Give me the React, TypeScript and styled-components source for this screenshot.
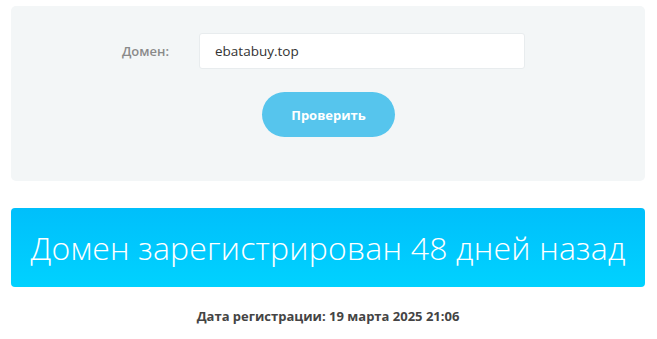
import React from 'react';
import styled, { createGlobalStyle } from 'styled-components';

const GlobalStyle = createGlobalStyle`
  body {
    margin: 0;
    background: #fff;
    font-family: 'Open Sans', 'Liberation Sans', sans-serif;
  }
`;

const Page = styled.div`
  padding: 6px 12px 0 11px;
`;

const FormPanel = styled.form`
  background: #f3f6f7;
  border-radius: 5px;
  height: 175px;
  box-sizing: border-box;
  padding-top: 27px;
  display: flex;
  flex-direction: column;
  align-items: center;
`;

const Row = styled.div`
  display: flex;
  align-items: center;
  width: 100%;
`;

const Label = styled.label`
  width: 188px;
  padding-right: 30px;
  box-sizing: border-box;
  text-align: right;
  font-family: 'Open Sans', sans-serif;
  font-size: 13px;
  font-weight: 600;
  color: #8a8a8a;
`;

const Input = styled.input`
  width: 326px;
  height: 36px;
  box-sizing: border-box;
  border: 1px solid #e8ecee;
  border-radius: 3px;
  background: #fff;
  padding: 0 15px;
  font-family: 'Open Sans', sans-serif;
  font-size: 13.5px;
  color: #333;
  outline: none;
`;

const Button = styled.button`
  margin-top: 23px;
  margin-left: 1px;
  width: 133px;
  height: 45px;
  border: none;
  border-radius: 23px;
  background: #56c5ed;
  color: #fff;
  font-family: 'Open Sans', sans-serif;
  font-weight: 700;
  font-size: 13px;
  cursor: pointer;
`;

const Banner = styled.div`
  margin-top: 27px;
  height: 79px;
  border-radius: 4px;
  background: linear-gradient(to bottom, #00bffb, #00d2ff);
  display: flex;
  align-items: center;
  justify-content: center;
  color: #fff;
  font-family: 'Open Sans', sans-serif;
  font-weight: 300;
  font-size: 32px;
  letter-spacing: 0.2px;
`;

const RegDate = styled.div`
  margin-top: 20px;
  text-align: center;
  font-family: 'Open Sans', sans-serif;
  font-weight: 700;
  font-size: 13px;
  color: #444;
`;

export default function App() {
  return (
    <>
      <GlobalStyle />
      <Page>
        <FormPanel onSubmit={e => e.preventDefault()}>
          <Row>
            <Label htmlFor="domain">Домен:</Label>
            <Input id="domain" defaultValue="ebatabuy.top" />
          </Row>
          <Button type="submit">Проверить</Button>
        </FormPanel>
        <Banner>Домен зарегистрирован 48 дней назад</Banner>
        <RegDate>Дата регистрации: 19 марта 2025 21:06</RegDate>
      </Page>
    </>
  );
}
